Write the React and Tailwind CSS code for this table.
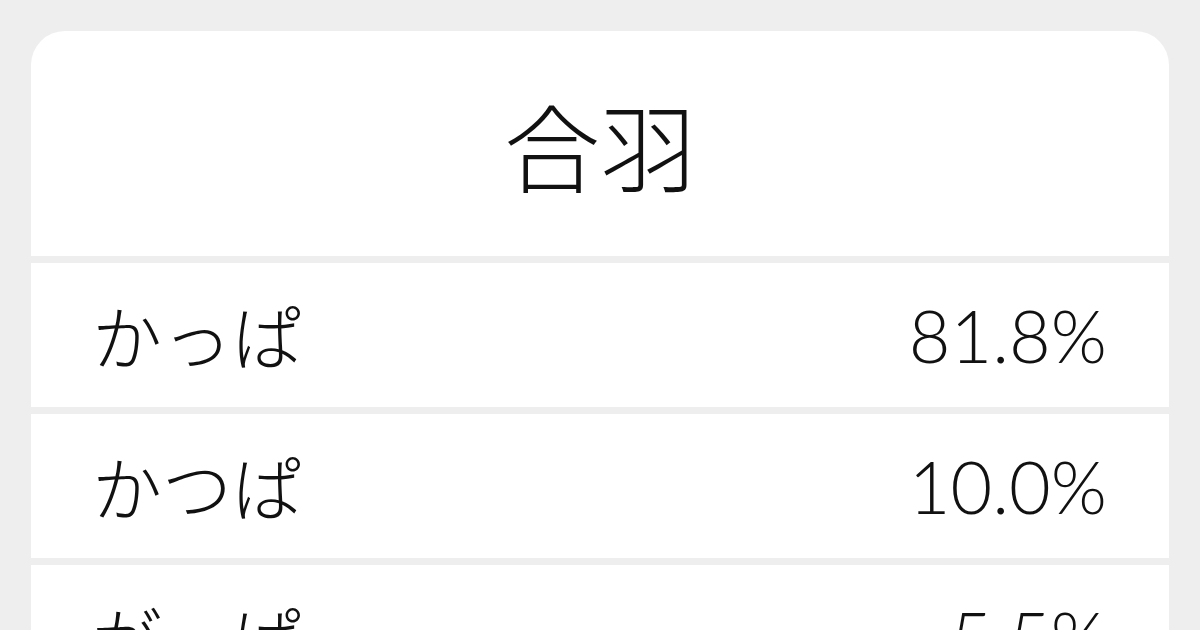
export default function App() {
  const rows = [
    ["かっぱ", "81.8%"],
    ["かつぱ", "10.0%"],
    ["がっぱ", "5.5%"],
  ];
  return (
    <div
      className="w-[1200px] h-[630px] overflow-hidden bg-[#eeeeee] pt-[31px] px-[31px]"
      style={{ fontFamily: '"Noto Sans CJK JP", "Noto Sans", sans-serif' }}
    >
      <div className="flex flex-col gap-[7px] rounded-t-[34px] overflow-hidden">
        <div className="h-[225px] bg-white flex items-center justify-center">
          <span className="text-[96px] leading-none text-[#111111] font-light">合羽</span>
        </div>
        {rows.map(([k, v]) => (
          <div key={k} className="h-[144px] shrink-0 bg-white flex items-center justify-between pl-[61px] pr-[62px]">
            <span className="text-[70px] leading-none font-light text-[#111111]">{k}</span>
            <span className="text-[72px] leading-none font-light text-[#111111] [font-family:Lato,'Noto_Sans_CJK_JP',sans-serif]">{v}</span>
          </div>
        ))}
      </div>
    </div>
  );
}
